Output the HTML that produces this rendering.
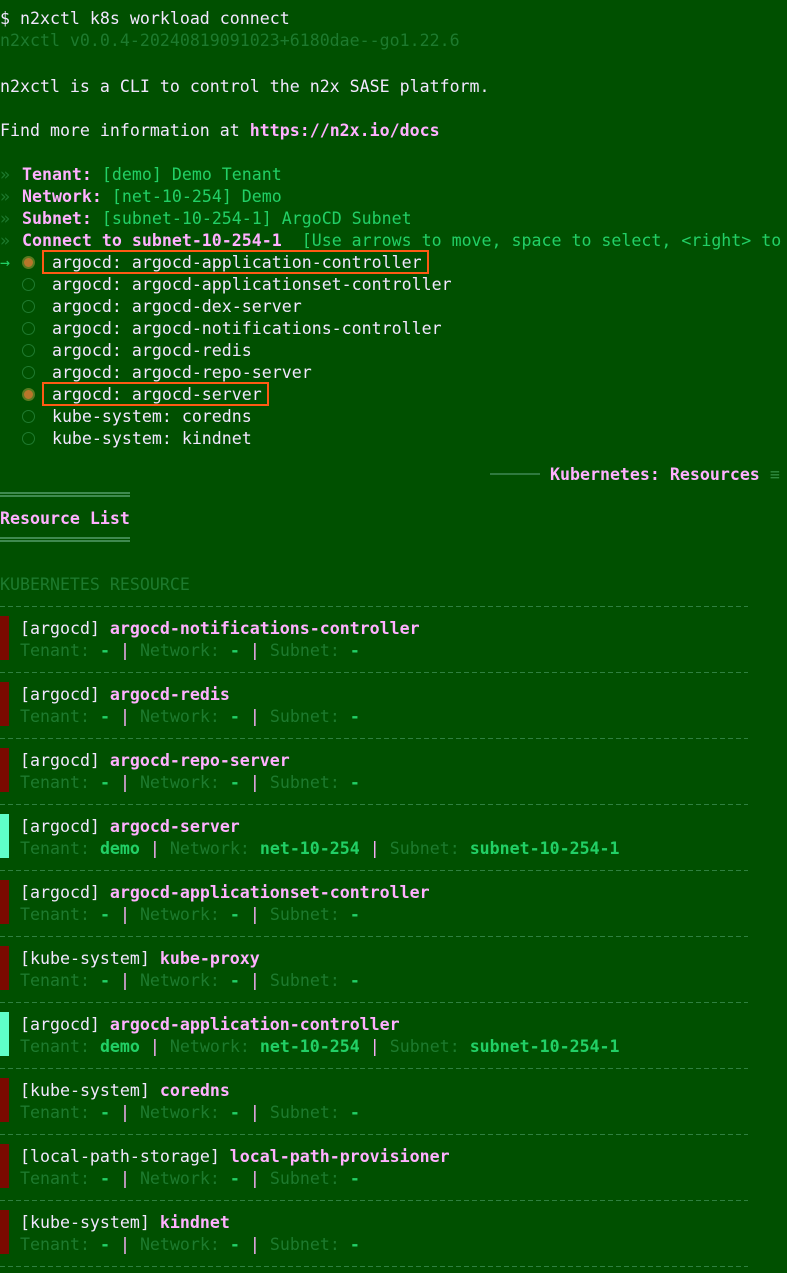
<!DOCTYPE html>
<html><head><meta charset="utf-8"><style>
html,body{margin:0;padding:0;background:#005000;width:787px;height:1273px;overflow:hidden}
body{position:relative;font-family:"DejaVu Sans Mono","Liberation Mono",monospace;font-size:16.6px;color:#f2e6ff}
.l{position:absolute;left:0;height:22px;line-height:22px;white-space:pre;margin-top:1px}
.p{color:#ffb0ff;font-weight:bold}
.g{color:#22d066}
.gb{color:#22d066;font-weight:bold}
.d{color:#1d7a2e}
.dd{color:#2f8a3f}
.pi{color:#ffb0ff}
.box{position:absolute;border:2.5px solid #ff5a14;box-sizing:border-box}
.rad{position:absolute;left:22px;width:13px;height:13px;border-radius:50%;border:1px solid #1f7a2f;box-sizing:border-box}
.rad.s{background:#b8762a;border:2px solid #5a7a20}
.dash{position:absolute;left:0;width:748px;height:1px;background:repeating-linear-gradient(90deg,#2f8040 0 5px,transparent 5px 8px)}
.bar{position:absolute;left:0;width:9px;height:44px}
.dbl{position:absolute;left:0;width:130px;height:5px;border-top:2px solid #3f8a4f;border-bottom:2px solid #3f8a4f;box-sizing:border-box}
.s2{left:2px}
</style></head><body>
<div class="l" style="top:7px">$ n2xctl k8s workload connect</div>
<div class="l d" style="top:29px">n2xctl v0.0.4-20240819091023+6180dae--go1.22.6</div>
<div class="l" style="top:75px">n2xctl is a CLI to control the n2x SASE platform.</div>
<div class="l" style="top:119px">Find more information at <b class="pi">https://n2x.io/docs</b></div>
<div class="l d" style="top:163px">»</div><div class="l s2" style="top:163px">  <span class="p">Tenant:</span> <span class="g">[demo] Demo Tenant</span></div>
<div class="l d" style="top:185px">»</div><div class="l s2" style="top:185px">  <span class="p">Network:</span> <span class="g">[net-10-254] Demo</span></div>
<div class="l d" style="top:207px">»</div><div class="l s2" style="top:207px">  <span class="p">Subnet:</span> <span class="g">[subnet-10-254-1] ArgoCD Subnet</span></div>
<div class="l d" style="top:229px">»</div><div class="l s2" style="top:229px">  <span class="p">Connect to subnet-10-254-1</span>  <span class="g">[Use arrows to move, space to select, &lt;right&gt; to all</span></div>
<div class="l g" style="top:251px">→</div>
<div class="rad s" style="top:256px"></div>
<div class="l s2" style="top:251px">     argocd: argocd-application-controller</div>
<div class="box" style="left:42px;top:250px;width:387px;height:24px"></div>
<div class="rad" style="top:278px"></div><div class="l s2" style="top:273px">     argocd: argocd-applicationset-controller</div>
<div class="rad" style="top:300px"></div><div class="l s2" style="top:295px">     argocd: argocd-dex-server</div>
<div class="rad" style="top:322px"></div><div class="l s2" style="top:317px">     argocd: argocd-notifications-controller</div>
<div class="rad" style="top:344px"></div><div class="l s2" style="top:339px">     argocd: argocd-redis</div>
<div class="rad" style="top:366px"></div><div class="l s2" style="top:361px">     argocd: argocd-repo-server</div>
<div class="rad s" style="top:388px"></div><div class="l s2" style="top:383px">     argocd: argocd-server</div>
<div class="box" style="left:42px;top:382px;width:227px;height:24px"></div>
<div class="rad" style="top:410px"></div><div class="l s2" style="top:405px">     kube-system: coredns</div>
<div class="rad" style="top:432px"></div><div class="l s2" style="top:427px">     kube-system: kindnet</div>

<div style="position:absolute;left:490px;top:473px;width:50px;height:2px;background:#2f7a3f"></div>
<div class="l p" style="top:463px;left:550px">Kubernetes: Resources</div>
<div class="l dd" style="top:463px;left:770px">≡</div>
<div class="dbl" style="top:492px"></div>
<div class="l p" style="top:507px">Resource List</div>
<div class="dbl" style="top:537px"></div>
<div class="l d" style="top:573px">KUBERNETES RESOURCE</div>

<div class="dash" style="top:606px"></div>
<div class="bar" style="top:616px;background:#7a0a00"></div>
<div class="l" style="top:617px;left:20px">[argocd] <span class="p">argocd-notifications-controller</span></div>
<div class="l" style="top:639px;left:20px"><span class="d">Tenant:</span> <span class="gb">-</span> <span class="pi">|</span> <span class="d">Network:</span> <span class="gb">-</span> <span class="pi">|</span> <span class="d">Subnet:</span> <span class="gb">-</span></div>

<div class="dash" style="top:672px"></div>
<div class="bar" style="top:682px;background:#7a0a00"></div>
<div class="l" style="top:683px;left:20px">[argocd] <span class="p">argocd-redis</span></div>
<div class="l" style="top:705px;left:20px"><span class="d">Tenant:</span> <span class="gb">-</span> <span class="pi">|</span> <span class="d">Network:</span> <span class="gb">-</span> <span class="pi">|</span> <span class="d">Subnet:</span> <span class="gb">-</span></div>

<div class="dash" style="top:738px"></div>
<div class="bar" style="top:748px;background:#7a0a00"></div>
<div class="l" style="top:749px;left:20px">[argocd] <span class="p">argocd-repo-server</span></div>
<div class="l" style="top:771px;left:20px"><span class="d">Tenant:</span> <span class="gb">-</span> <span class="pi">|</span> <span class="d">Network:</span> <span class="gb">-</span> <span class="pi">|</span> <span class="d">Subnet:</span> <span class="gb">-</span></div>

<div class="dash" style="top:804px"></div>
<div class="bar" style="top:814px;background:#5fffc8"></div>
<div class="l" style="top:815px;left:20px">[argocd] <span class="p">argocd-server</span></div>
<div class="l" style="top:837px;left:20px"><span class="d">Tenant:</span> <span class="gb">demo</span> <span class="pi">|</span> <span class="d">Network:</span> <span class="gb">net-10-254</span> <span class="pi">|</span> <span class="d">Subnet:</span> <span class="gb">subnet-10-254-1</span></div>

<div class="dash" style="top:870px"></div>
<div class="bar" style="top:880px;background:#7a0a00"></div>
<div class="l" style="top:881px;left:20px">[argocd] <span class="p">argocd-applicationset-controller</span></div>
<div class="l" style="top:903px;left:20px"><span class="d">Tenant:</span> <span class="gb">-</span> <span class="pi">|</span> <span class="d">Network:</span> <span class="gb">-</span> <span class="pi">|</span> <span class="d">Subnet:</span> <span class="gb">-</span></div>

<div class="dash" style="top:936px"></div>
<div class="bar" style="top:946px;background:#7a0a00"></div>
<div class="l" style="top:947px;left:20px">[kube-system] <span class="p">kube-proxy</span></div>
<div class="l" style="top:969px;left:20px"><span class="d">Tenant:</span> <span class="gb">-</span> <span class="pi">|</span> <span class="d">Network:</span> <span class="gb">-</span> <span class="pi">|</span> <span class="d">Subnet:</span> <span class="gb">-</span></div>

<div class="dash" style="top:1002px"></div>
<div class="bar" style="top:1012px;background:#5fffc8"></div>
<div class="l" style="top:1013px;left:20px">[argocd] <span class="p">argocd-application-controller</span></div>
<div class="l" style="top:1035px;left:20px"><span class="d">Tenant:</span> <span class="gb">demo</span> <span class="pi">|</span> <span class="d">Network:</span> <span class="gb">net-10-254</span> <span class="pi">|</span> <span class="d">Subnet:</span> <span class="gb">subnet-10-254-1</span></div>

<div class="dash" style="top:1068px"></div>
<div class="bar" style="top:1078px;background:#7a0a00"></div>
<div class="l" style="top:1079px;left:20px">[kube-system] <span class="p">coredns</span></div>
<div class="l" style="top:1101px;left:20px"><span class="d">Tenant:</span> <span class="gb">-</span> <span class="pi">|</span> <span class="d">Network:</span> <span class="gb">-</span> <span class="pi">|</span> <span class="d">Subnet:</span> <span class="gb">-</span></div>

<div class="dash" style="top:1134px"></div>
<div class="bar" style="top:1144px;background:#7a0a00"></div>
<div class="l" style="top:1145px;left:20px">[local-path-storage] <span class="p">local-path-provisioner</span></div>
<div class="l" style="top:1167px;left:20px"><span class="d">Tenant:</span> <span class="gb">-</span> <span class="pi">|</span> <span class="d">Network:</span> <span class="gb">-</span> <span class="pi">|</span> <span class="d">Subnet:</span> <span class="gb">-</span></div>

<div class="dash" style="top:1200px"></div>
<div class="bar" style="top:1210px;background:#7a0a00"></div>
<div class="l" style="top:1211px;left:20px">[kube-system] <span class="p">kindnet</span></div>
<div class="l" style="top:1233px;left:20px"><span class="d">Tenant:</span> <span class="gb">-</span> <span class="pi">|</span> <span class="d">Network:</span> <span class="gb">-</span> <span class="pi">|</span> <span class="d">Subnet:</span> <span class="gb">-</span></div>
<div class="dash" style="top:1266px"></div>
</body></html>
